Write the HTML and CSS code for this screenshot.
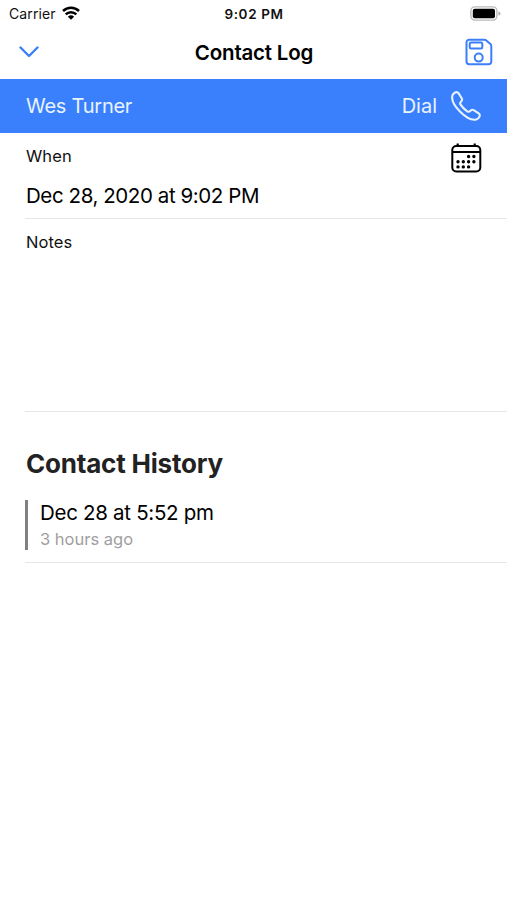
FILE: index.html
```html
<!DOCTYPE html>
<html lang="en">
<head>
    <meta charset="UTF-8">
    <meta name="viewport" content="width=device-width, initial-scale=1.0">
    <title>Contact Log</title>
    <link rel="stylesheet" href="styles.css">
</head>
<body>
    <div class="status-bar">
        <div class="carrier">
            <span>Carrier</span>
            <svg class="wifi" width="18" height="14" viewBox="0 0 18 14">
                <path d="M1 5a11.5 11.5 0 0 1 16 0M3.7 8.300a7.600 7.600 0 0 1 10.600 0" fill="none" stroke="#000" stroke-width="2.500"/>
                <path d="M9 13.800L5.900 10.700a4.500 4.500 0 0 1 6.200 0z"/>
            </svg>
        </div>
        <span class="time">9:02 PM</span>
        <svg class="battery" width="31" height="15" viewBox="0 0 31 15">
            <rect x="0.9" y="0.9" width="26" height="13.2" rx="4" fill="#fff" stroke="#bbb" stroke-width="1.4"/>
            <rect x="2.8" y="2.8" width="22.2" height="9.4" rx="2"/>
            <path d="M28.5 5.2v4.6q2-.8 2-2.3t-2-2.3z" fill="#aaa"/>
        </svg>
    </div>

    <header class="nav">
        <svg class="chevron" width="20" height="12" viewBox="0 0 20 12">
            <path d="M1.500 1.500L10 10l8.500-8.500"/>
        </svg>
        <h1>Contact Log</h1>
        <svg class="save" width="28" height="28" viewBox="0 0 28 28">
            <path d="M4.200 1.700h15.300q1 0 1.800.7l4.100 3.700q.9.800.9 2v15.500a2.700 2.700 0 0 1-2.700 2.700H4.200a2.700 2.700 0 0 1-2.700-2.700V4.400a2.700 2.700 0 0 1 2.700-2.700z"/>
            <rect x="4.700" y="4.600" width="12.600" height="6" rx="1.300"/>
            <circle cx="13.700" cy="19.600" r="4"/>
        </svg>
    </header>

    <div class="contact">
        <span class="name">Wes Turner</span>
        <div class="dial">
            <span>Dial</span>
            <svg width="30" height="30" viewBox="0 0 30 30">
                <path d="M1.200 5.300C1.500 3.300 3.700 1.300 5.400 1.100c.9-.1 1.500.3 2.100 1.100l3.200 5c.8 1.300.5 2.200-.5 3.200-1.200 1.100-1.600 1.800-.6 3.300 1.700 2.600 4 4.900 6.600 6.600 1.500 1 2.200.6 3.300-.6 1-1 1.900-1.300 3.200-.5l5 3.200c.8.600 1.200 1.200 1.100 2.100-.2 1.700-2.200 3.900-4.200 4.200-3.900.6-10.200-2.700-15.400-7.900C4 15.600.7 9.200 1.200 5.300z"/>
            </svg>
        </div>
    </div>

    <main>
        <section class="field when">
            <div>
                <div class="label">When</div>
                <div class="value date">Dec 28, 2020 at 9:02 PM</div>
            </div>
            <svg class="calendar" width="31" height="30" viewBox="0 0 31 30">
                <rect x="1.300" y="3" width="28" height="25.500" rx="4" fill="none" stroke="#000" stroke-width="2"/>
                <path d="M1.300 9h28M6.700 .500v3M23.700 .500v3" fill="none" stroke="#000" stroke-width="2.200"/>
                <path class="dots" d="M17.600 13.500h0M22.900 13.500h0M7 18.700h0M12.300 18.700h0M17.600 18.700h0M22.900 18.700h0M7 23.900h0M12.300 23.900h0M17.600 23.900h0"/>
            </svg>
        </section>

        <section class="field notes">
            <div class="label">Notes</div>
        </section>

        <section class="history">
            <h2>Contact History</h2>
            <div class="entry">
                <div class="entry-body">
                    <div class="value">Dec 28 at 5:52 pm</div>
                    <div class="ago">3 hours ago</div>
                </div>
            </div>
        </section>
    </main>
</body>
</html>
```
FILE: styles.css
```css
* {
    box-sizing: border-box;
}
body {
    margin: 0;
    min-height: 900px;
    background-color: #fff;
    color: #111;
    font-family: Inter, "Liberation Sans", sans-serif;
}
svg {
    display: block;
    flex: none;
}
h1, h2 {
    margin: 0;
}
.status-bar {
    display: grid;
    grid-template-columns: 1fr auto 1fr;
    align-items: center;
    height: 27px;
    padding: 0 6px 0 9px;
    font-size: 14px;
}
.carrier {
    display: flex;
    align-items: center;
    gap: 6px;
    letter-spacing: 0.1px;
}
.wifi {
    margin-top: -2px;
}
.time {
    margin-left: -2px;
    font-weight: 600;
    font-size: 13.5px;
    letter-spacing: 0.6px;
}
.battery {
    justify-self: end;
}
.nav {
    display: grid;
    grid-template-columns: 1fr auto 1fr;
    align-items: center;
    height: 52px;
    padding: 0 14px 0 19px;
}
.nav h1 {
    margin: -1px 4px 0 0;
    font-size: 20.5px;
    font-weight: 600;
    line-height: 24px;
    letter-spacing: -0.2px;
    color: #000;
}
.chevron, .save {
    fill: none;
    stroke: #3b80f8;
    stroke-width: 2;
    stroke-linecap: round;
    stroke-linejoin: round;
}
.chevron {
    margin-top: -2px;
    stroke-width: 2.4;
}
.save {
    justify-self: end;
    margin-top: -2px;
}
.contact {
    display: flex;
    justify-content: space-between;
    align-items: center;
    height: 54px;
    padding: 0 26px;
    background-color: #3a80fd;
    color: #e9f3ff;
    font-size: 20px;
}
.name {
    letter-spacing: -0.25px;
}
.dial {
    display: flex;
    align-items: center;
    gap: 14px;
}
.dial path {
    fill: none;
    stroke: #e9f3ff;
    stroke-width: 2.1;
}
main {
    padding-left: 25px;
}
.field {
    border-bottom: 1px solid #e6e6e6;
}
.label {
    padding-left: 1px;
    font-size: 16.5px;
    line-height: 20px;
    letter-spacing: 0.1px;
}
.value {
    font-size: 20.5px;
    line-height: 26px;
    letter-spacing: -0.3px;
    color: #000;
}
.date {
    letter-spacing: -0.42px;
}
.when {
    display: flex;
    justify-content: space-between;
    height: 86px;
    padding: 13px 25px 0 0;
}
.when .value {
    margin-top: 17px;
    padding-left: 1px;
}
.calendar {
    margin-top: -3px;
}
.dots {
    stroke: #000;
    stroke-width: 3.4;
    stroke-linecap: round;
}
.notes {
    height: 193px;
    padding-top: 13px;
}
.history {
    padding-top: 34px;
}
.history h2 {
    padding-left: 1px;
    font-size: 26px;
    line-height: 36px;
    letter-spacing: -0.2px;
    color: #222;
}
.entry {
    margin-top: 18px;
    padding-bottom: 12px;
    border-bottom: 1px solid #e6e6e6;
}
.entry-body {
    height: 50px;
    padding-left: 12px;
    border-left: 3px solid #808080;
}
.ago {
    font-size: 16.5px;
    line-height: 26px;
    color: #a0a0a0;
}
```
